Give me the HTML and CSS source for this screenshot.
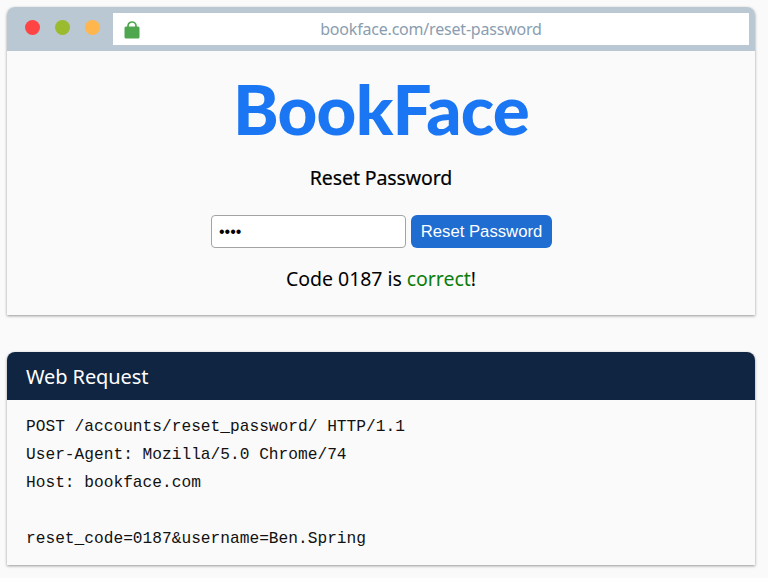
FILE: index.html
```html
<!DOCTYPE html>
<html lang="en">
<head>
<meta charset="utf-8">
<title>BookFace</title>
<link rel="stylesheet" href="styles.css">
</head>
<body>
<main class="page">
  <section class="window">
    <div class="titlebar">
      <div class="dots">
        <span class="dot dot-red"></span>
        <span class="dot dot-green"></span>
        <span class="dot dot-orange"></span>
      </div>
      <div class="urlbar">
        <svg class="lock" viewBox="0 0 16 19" width="16" height="19" aria-hidden="true">
          <path d="M4 8V6a4 4 0 0 1 8 0v2" fill="none" stroke="#4ea64f" stroke-width="1.7"/>
          <rect x="0.5" y="6.5" width="15" height="12" rx="1.5" fill="#4ea64f"/>
        </svg>
        <span class="url">bookface.com/reset-password</span>
      </div>
    </div>
    <div class="window-body">
      <h1 class="logo">BookFace</h1>
      <h2 class="subtitle">Reset Password</h2>
      <form class="reset-form">
        <input class="code-input" type="password" value="0187">
        <button class="reset-button" type="button">Reset Password</button>
      </form>
      <p class="result">Code 0187 is <span class="ok">correct</span>!</p>
    </div>
  </section>
  <section class="request">
    <h3 class="request-title">Web Request</h3>
    <div class="request-body">
      <div class="line">POST /accounts/reset_password/ HTTP/1.1</div>
      <div class="line">User-Agent: Mozilla/5.0 Chrome/74</div>
      <div class="line">Host: bookface.com</div>
      <div class="line">&nbsp;</div>
      <div class="line">reset_code=0187&amp;username=Ben.Spring</div>
    </div>
  </section>
</main>
</body>
</html>
```
FILE: styles.css
```css
* { box-sizing: border-box; }
html, body { margin: 0; padding: 0; }
body {
  background: #fafafa;
  color: #000;
  font-family: "Noto Sans", "Open Sans", sans-serif;
  height: 578px;
  overflow: hidden;
}
.page {
  display: flex;
  flex-direction: column;
  gap: 37px;
  padding: 7px 13px 0 7px;
}
.window {
  height: 308px;
  border-radius: 8px 8px 0 0;
  box-shadow: 0 1px 3px rgba(0,0,0,.4);
  background: #fafafa;
  overflow: hidden;
}
.titlebar {
  height: 44px;
  background: #bac8d3;
  display: flex;
  align-items: center;
  padding: 0 6px 0 18px;
}
.dots { display: flex; gap: 15px; width: 88px; flex: none; margin-top: -3px; }
.dot { width: 15px; height: 15px; border-radius: 50%; }
.dot-red { background: #ff4444; }
.dot-green { background: #9abb2e; }
.dot-orange { background: #ffb64d; }
.urlbar {
  flex: 1;
  height: 32px;
  background: #fff;
  display: flex;
  align-items: center;
  justify-content: center;
  position: relative;
}
.lock { position: absolute; left: 11px; top: 7px; }
.url {
  color: #8a9db0;
  font-size: 16px;
  letter-spacing: -0.2px;
  white-space: nowrap;
}
.window-body {
  display: flex;
  flex-direction: column;
  align-items: center;
}
.logo {
  margin: 18px 0 0;
  font-family: "Lato", "Noto Sans", sans-serif;
  font-size: 69px;
  line-height: 80px;
  font-weight: 900;
  letter-spacing: -0.8px;
  color: #1a76f2;
}
.subtitle {
  margin: 17px 0 0;
  font-size: 19.5px;
  line-height: 24px;
  font-weight: 400;
  -webkit-text-stroke: 0.2px #000;
  letter-spacing: -0.1px;
}
.reset-form {
  display: flex;
  gap: 5px;
  margin-top: 25px;
  padding-left: 1px;
}
.code-input {
  width: 195px;
  height: 33px;
  border: 1px solid #a3a3a3;
  border-radius: 4px;
  padding: 0 7px;
  background: #fff;
  font-size: 16px;
  font-family: "Liberation Sans", sans-serif;
}
.reset-button {
  width: 141px;
  height: 33px;
  border: 0;
  border-radius: 6px;
  background: #206dd1;
  color: #fff;
  font-family: "Liberation Sans", sans-serif;
  font-size: 16.7px;
  padding: 0;
}
.result {
  margin: 18px 0 0;
  font-size: 19.5px;
  line-height: 26px;
  letter-spacing: -0.05px;
}
.ok { color: #0a7d0a; }
.request {
  height: 213px;
  border-radius: 8px 8px 0 0;
  box-shadow: 0 1px 3px rgba(0,0,0,.4);
  background: #fafafa;
  overflow: hidden;
}
.request-title {
  margin: 0;
  height: 48px;
  background: #102542;
  color: #fff;
  font-size: 20px;
  font-weight: 400;
  line-height: 50px;
  letter-spacing: -0.1px;
  padding-left: 19px;
}
.request-body {
  padding: 13px 19px 0;
  font-family: "Liberation Mono", monospace;
  font-size: 16.2px;
  line-height: 28px;
  color: #111;
}
```
